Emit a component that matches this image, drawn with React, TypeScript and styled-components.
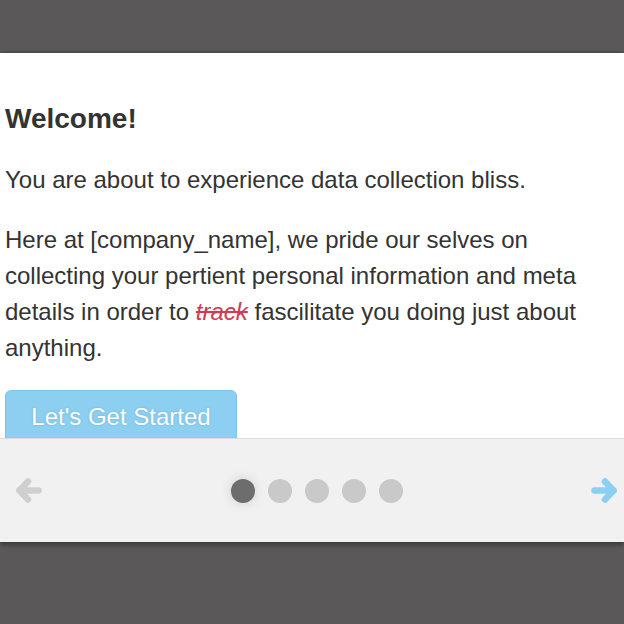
import React from "react";
import styled, { createGlobalStyle } from "styled-components";

const Global = createGlobalStyle`
  html, body { margin: 0; padding: 0; }
  body {
    background: #5a5859;
    font-family: "Liberation Sans", Arial, sans-serif;
    width: 624px;
    height: 624px;
    overflow: hidden;
  }
`;

const Page = styled.div`
  padding-top: 53px;
  box-sizing: border-box;
  height: 624px;
  background: linear-gradient(#5a5859 0, #5a5859 51px, #4f4e4f 52px, #5a5859 53px);
`;

const Modal = styled.div`
  background: #fff;
  height: 489px;
  display: flex;
  flex-direction: column;
  overflow: hidden;
  box-shadow: 0 2px 6px rgba(0, 0, 0, 0.45);
`;

const Body = styled.div`
  height: 385px;
  overflow: hidden;
  padding: 51px 0 0 5px;
  box-sizing: border-box;
  color: #333;
`;

const Title = styled.h2`
  margin: 0 0 28px;
  font-size: 28px;
  line-height: 30px;
  font-weight: bold;
`;

const Para = styled.p`
  margin: 0 0 24px;
  font-size: 24px;
  line-height: 36px;
  padding-right: 30px;
`;

const Struck = styled.em`
  color: #cf3d52;
  text-decoration: line-through;
`;

const StartButton = styled.button`
  display: block;
  width: 232px;
  height: 54px;
  padding: 8px 0;
  border: 1px solid #7fc4e7;
  border-radius: 6px;
  background: #8dcff1;
  color: #fff;
  font-family: "Liberation Sans", Arial, sans-serif;
  font-size: 24px;
  line-height: 36px;
  text-shadow: 0 0 2px rgba(90, 160, 200, 0.7);
  cursor: pointer;
`;

const Footer = styled.div`
  flex: 1;
  background: #f1f1f1;
  border-top: 1px solid #dcdcdc;
  display: flex;
  align-items: center;
  justify-content: space-between;
  padding: 0 6px 0 15px;
`;

const Arrow = styled.svg<{ $active?: boolean }>`
  display: block;
  width: 27px;
  height: 27px;
  color: ${(p) => (p.$active ? "#8dcff1" : "#cfcfcf")};
`;

const Dots = styled.div`
  display: flex;
  gap: 13px;
`;

const Dot = styled.span<{ $on?: boolean }>`
  width: 24px;
  height: 24px;
  border-radius: 50%;
  background: ${(p) => (p.$on ? "#6d6d6d" : "#c9c9c9")};
  box-shadow: ${(p) => (p.$on ? "0 0 10px 3px rgba(0,0,0,0.08)" : "none")};
`;

function ArrowIcon({ dir, active }: { dir: "left" | "right"; active?: boolean }) {
  return (
    <Arrow $active={active} viewBox="0 0 27 27">
      <g
        fill="none"
        stroke="currentColor"
        strokeWidth={6.5}
        strokeLinecap="round"
        strokeLinejoin="round"
        transform={dir === "right" ? "translate(27 0) scale(-1 1)" : undefined}
      >
        <path d="M4.5 13.5 H23.5" />
        <path d="M13 4.5 L4.5 13.5 L13 22.5" />
      </g>
    </Arrow>
  );
}

export default function App() {
  return (
    <>
      <Global />
      <Page>
        <Modal>
          <Body>
            <Title>Welcome!</Title>
            <Para>You are about to experience data collection bliss.</Para>
            <Para>
              Here at [company_name], we pride our selves on collecting your pertient personal
              information and meta details in order to <Struck>track</Struck> fascilitate you doing
              just about anything.
            </Para>
            <StartButton>Let's Get Started</StartButton>
          </Body>
          <Footer>
            <ArrowIcon dir="left" />
            <Dots>
              {[0, 1, 2, 3, 4].map((i) => (
                <Dot key={i} $on={i === 0} />
              ))}
            </Dots>
            <ArrowIcon dir="right" active />
          </Footer>
        </Modal>
      </Page>
    </>
  );
}
